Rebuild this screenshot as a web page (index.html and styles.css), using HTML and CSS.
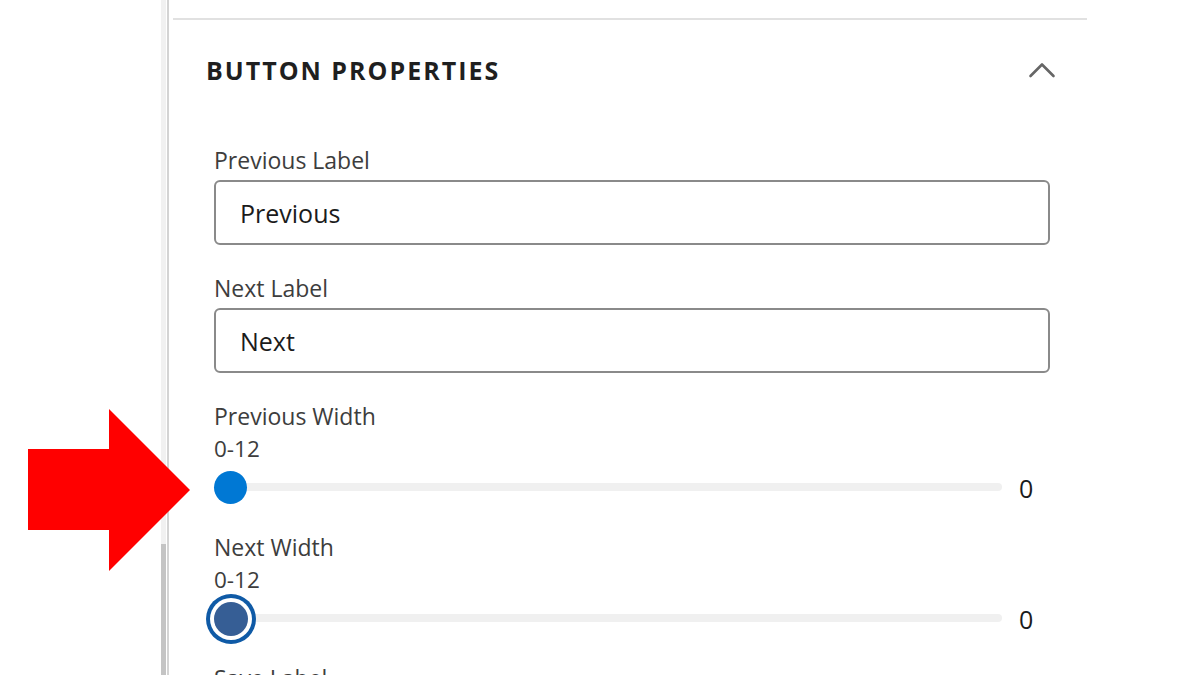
FILE: index.html
```html
<!DOCTYPE html>
<html lang="en">
<head>
<meta charset="utf-8">
<title>Button Properties</title>
<link rel="stylesheet" href="styles.css">
</head>
<body>
<div class="page">
  <div class="gutter"></div>
  <div class="scrolltrack"><div class="scrollthumb"></div></div>
  <div class="edge"></div>
  <div class="panel">
    <div class="rule"></div>
    <div class="section-head">
      <h2 class="section-title">BUTTON PROPERTIES</h2>
      <svg class="chevron" width="28" height="18" viewBox="0 0 28 18" aria-hidden="true">
        <polyline points="2.5,15 14,3.5 25.5,15" fill="none" stroke="#666666" stroke-width="2.6" stroke-linecap="round" stroke-linejoin="round"/>
      </svg>
    </div>
    <div class="fields">
      <div class="field">
        <div class="label">Previous Label</div>
        <div class="input">Previous</div>
      </div>
      <div class="field">
        <div class="label">Next Label</div>
        <div class="input">Next</div>
      </div>
      <div class="field">
        <div class="label">Previous Width</div>
        <div class="range">0-12</div>
        <div class="slider">
          <div class="track"><div class="thumb"></div></div>
          <div class="value">0</div>
        </div>
      </div>
      <div class="field">
        <div class="label">Next Width</div>
        <div class="range">0-12</div>
        <div class="slider">
          <div class="track"><div class="thumb thumb-focus"></div></div>
          <div class="value">0</div>
        </div>
      </div>
      <div class="field">
        <div class="label">Save Label</div>
      </div>
    </div>
  </div>
  <svg class="arrow" width="200" height="675" viewBox="0 0 200 675" aria-hidden="true">
    <polygon points="28,449 109,449 109,409 190,490 109,571 109,530 28,530" fill="#ff0000"/>
  </svg>
</div>
</body>
</html>
```

FILE: styles.css
```css
html, body {
  margin: 0;
  padding: 0;
  background: #ffffff;
}
body {
  font-family: "Open Sans", "Noto Sans", sans-serif;
  color: #3d3d3d;
}
.page {
  position: relative;
  display: flex;
  width: 1200px;
  height: 675px;
  overflow: hidden;
}
.gutter {
  width: 161px;
  flex: 0 0 161px;
}
.scrolltrack {
  width: 5px;
  flex: 0 0 5px;
  background: #f1f1f1;
  display: flex;
  flex-direction: column;
}
.scrollthumb {
  margin-top: 544px;
  flex: 1;
  background: #c4c4c4;
}
.edge {
  width: 2px;
  flex: 0 0 2px;
  margin-left: 1px;
  background: #d4d4d4;
}
.panel {
  width: 914px;
  flex: 0 0 914px;
  margin-left: 4px;
  padding-top: 18px;
}
.rule {
  height: 2px;
  background: #e1e1e1;
}
.section-head {
  height: 102px;
  display: flex;
  align-items: center;
  justify-content: space-between;
  padding: 0 31px 0 33px;
}
.section-title {
  margin: 0;
  font-size: 25px;
  font-weight: 700;
  letter-spacing: 2px;
  color: #1f1f1f;
  line-height: 30px;
  margin-top: -2px;
}
.chevron {
  display: block;
  margin-top: -2px;
}
.fields {
  padding-left: 41px;
  width: 836px;
  margin-top: 24px;
  display: flex;
  flex-direction: column;
  gap: 29px;
}
.field {
  display: flex;
  flex-direction: column;
}
.label {
  font-size: 23px;
  line-height: 28px;
  color: #3d3d3d;
}
.input {
  margin-top: 6px;
  height: 65px;
  box-sizing: border-box;
  border: 2px solid #8a8a8a;
  border-radius: 6px;
  padding: 1px 24px 0;
  display: flex;
  align-items: center;
  font-size: 25px;
  color: #1b1b1b;
}
.range {
  margin-top: 5px;
  font-size: 22.5px;
  line-height: 28px;
  color: #3d3d3d;
}
.slider {
  margin-top: 8px;
  height: 33px;
  display: flex;
  align-items: center;
}
.track {
  position: relative;
  width: 788px;
  flex: 0 0 788px;
  height: 8px;
  border-radius: 4px;
  background: #f0f0f0;
  margin-top: -1px;
}
.thumb {
  position: absolute;
  left: 0;
  top: -12px;
  width: 33px;
  height: 33px;
  border-radius: 50%;
  background: #0078d4;
}
.thumb-focus {
  width: 34px;
  height: 34px;
  left: 0;
  top: -12px;
  background: #365e95;
  box-shadow: 0 0 0 4px #ffffff, 0 0 0 8px #0f5aa6;
}
.value {
  margin-left: 17px;
  font-size: 25px;
  line-height: 33px;
  color: #1b1b1b;
  padding-top: 1px;
}
.arrow {
  position: absolute;
  left: 0;
  top: 0;
}
```
